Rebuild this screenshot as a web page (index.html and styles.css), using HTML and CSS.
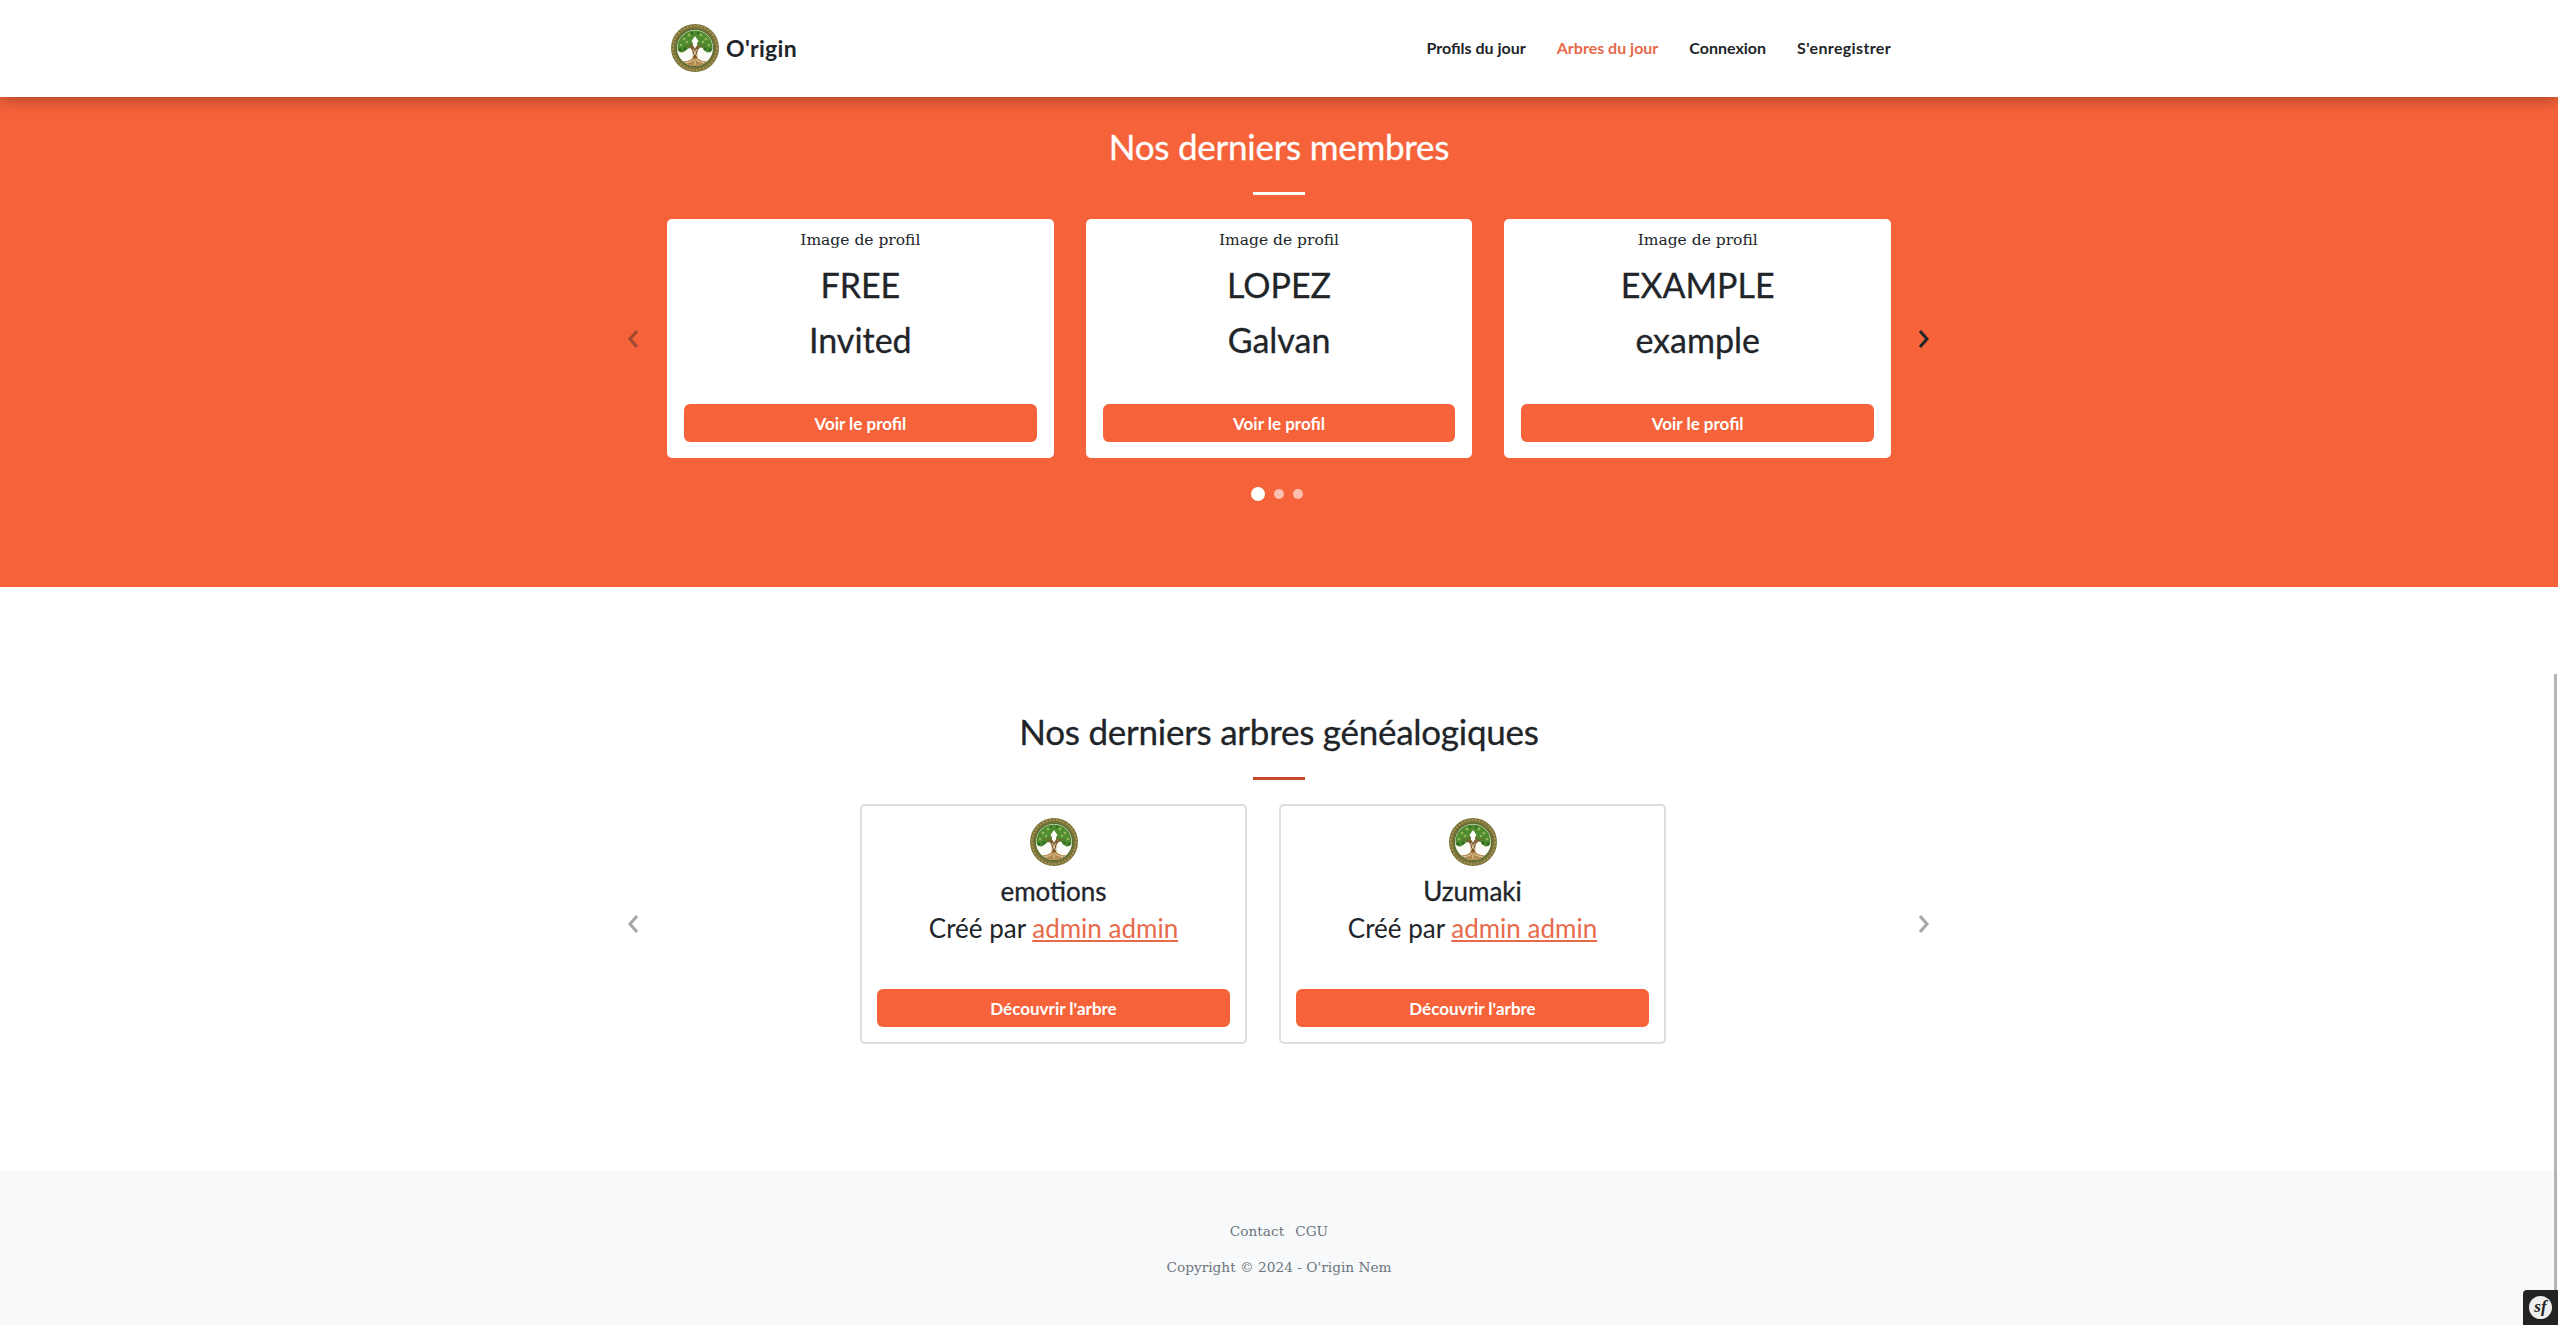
FILE: index.html
```html
<!DOCTYPE html>
<html lang="fr">
<head>
<meta charset="utf-8">
<title>O'rigin</title>
<link rel="stylesheet" href="styles.css">
</head>
<body>
<svg class="defs" width="0" height="0" aria-hidden="true">
  <symbol id="tree" viewBox="0 0 48 48">
    <circle cx="24" cy="24" r="24" fill="#7b7339"/>
    <circle cx="24" cy="24" r="22" fill="none" stroke="#a39254" stroke-width="2" stroke-dasharray="2 1.5"/>
    <circle cx="24" cy="24" r="19.5" fill="#5d6f33"/>
    <circle cx="24" cy="24" r="18" fill="#fdfbf5"/>
    <path d="M6.5 25C6 14 14 6.500 24 6.500S42 14 41.500 25c-1 3-4 4-6.500 3-1-3-5-5-8-5.500L24 14l-3 9.500c-3 .5-7 2.500-8 4.500-2.500 1-5.500 0-6.500-3z" fill="#4f8c2f"/>
    <g fill="#8fb65a">
      <circle cx="13" cy="15" r="1.500"/><circle cx="18" cy="11" r="1.500"/><circle cx="30" cy="11" r="1.500"/><circle cx="35" cy="15" r="1.500"/>
      <circle cx="10" cy="21" r="1.300"/><circle cx="38" cy="21" r="1.300"/><circle cx="16" cy="18" r="1.300"/><circle cx="32" cy="18" r="1.300"/>
    </g>
    <g fill="#2f6b20">
      <circle cx="9" cy="26" r="1.700"/><circle cx="39" cy="26" r="1.700"/><circle cx="14" cy="25" r="1.700"/><circle cx="34" cy="25" r="1.700"/>
      <circle cx="21" cy="9" r="1.200"/><circle cx="27" cy="9" r="1.200"/>
    </g>
    <path d="M24 12l3.500 5-3.500 5-3.500-5z" fill="#fff"/>
    <path d="M20.500 37c1.500-4 2-8 .5-11-2-3-5-4-8-4.500 3-.5 6 .5 8 2-.5-1.500-1.500-3-3-4.500 3 1 5 3 6 6 1-3 3-5 6-6-1.500 1.500-2.500 3-3 4.500 2-1.500 5-2.500 8-2-3 .5-6 1.500-8 4.500-1.500 3-1 7 .5 11z" fill="#7d5a2e"/>
    <path d="M22 25l5 9M26 25l-5 9" stroke="#e9d7ae" stroke-width=".9" fill="none"/>
    <path d="M12 37c4 .5 7-.5 10-3h4c3 2.500 6 3.500 10 3-3 3-7 5-12 5s-9-2-12-5z" fill="#b3884c"/>
    <path d="M15 38.500c3 0 6-1 8-3M33 38.500c-3 0-6-1-8-3M24 36v5" stroke="#f1e2bd" stroke-width=".8" fill="none"/>
  </symbol>
</svg>

<header class="site-header">
  <div class="wrap nav-row">
    <a class="brand" href="#">
      <svg class="logo"><use href="#tree"/></svg>
      <span>O'rigin</span>
    </a>
    <nav class="main-nav">
      <a href="#">Profils du jour</a>
      <a class="active" href="#">Arbres du jour</a>
      <a href="#">Connexion</a>
      <a class="signup" href="#">S'enregistrer</a>
    </nav>
  </div>
</header>

<main>
  <section class="hero">
    <h2 class="section-title light">Nos derniers membres</h2>
    <div class="rule rule-light"></div>
    <div class="carousel">
      <button class="arrow arrow-prev dim" aria-label="Précédent"><svg viewBox="0 0 14 22"><path d="M11 3L4 11l7 8"/></svg></button>
      <div class="cards">
        <article class="card">
          <p class="img-alt">Image de profil</p>
          <h3>FREE</h3>
          <h3>Invited</h3>
          <a class="btn" href="#">Voir le profil</a>
        </article>
        <article class="card">
          <p class="img-alt">Image de profil</p>
          <h3>LOPEZ</h3>
          <h3>Galvan</h3>
          <a class="btn" href="#">Voir le profil</a>
        </article>
        <article class="card">
          <p class="img-alt">Image de profil</p>
          <h3>EXAMPLE</h3>
          <h3>example</h3>
          <a class="btn" href="#">Voir le profil</a>
        </article>
      </div>
      <button class="arrow arrow-next" aria-label="Suivant"><svg viewBox="0 0 14 22"><path d="M3 3l7 8-7 8"/></svg></button>
    </div>
    <div class="dots"><span class="dot on"></span><span class="dot"></span><span class="dot"></span></div>
  </section>

  <section class="trees">
    <h2 class="section-title">Nos derniers arbres généalogiques</h2>
    <div class="rule rule-dark"></div>
    <div class="carousel">
      <button class="arrow arrow-prev faint" aria-label="Précédent"><svg viewBox="0 0 14 22"><path d="M11 3L4 11l7 8"/></svg></button>
      <div class="cards cards-shifted">
        <article class="card card-line">
          <svg class="logo tree-logo"><use href="#tree"/></svg>
          <h4>emotions</h4>
          <p class="by">Créé par <a href="#">admin admin</a></p>
          <a class="btn" href="#">Découvrir l'arbre</a>
        </article>
        <article class="card card-line">
          <svg class="logo tree-logo"><use href="#tree"/></svg>
          <h4>Uzumaki</h4>
          <p class="by">Créé par <a href="#">admin admin</a></p>
          <a class="btn" href="#">Découvrir l'arbre</a>
        </article>
      </div>
      <button class="arrow arrow-next faint" aria-label="Suivant"><svg viewBox="0 0 14 22"><path d="M3 3l7 8-7 8"/></svg></button>
    </div>
  </section>
</main>

<footer class="site-footer">
  <div class="foot-links"><a href="#">Contact</a><a href="#">CGU</a></div>
  <p class="copy">Copyright © 2024 - O'rigin Nem</p>
</footer>

<div class="scroll-thumb"></div>
<div class="sf-toolbar"><span class="sf-badge">sf</span></div>
</body>
</html>
```

FILE: styles.css
```css
* { box-sizing: border-box; }
html, body { margin: 0; height: 100%; }
body {
  font-family: "DejaVu Serif", "Liberation Serif", serif;
  color: #212529;
  background: #fff;
  overflow: hidden;
}
a { color: inherit; text-decoration: none; }
.defs { position: absolute; }
.wrap { width: 1224px; margin: 0 auto; }

.site-header {
  height: 97px;
  background: #fff;
  position: relative;
  z-index: 2;
  box-shadow: 0 4px 14px rgba(0, 0, 0, .28);
}
.nav-row {
  height: 100%;
  padding-bottom: 2px;
  display: flex;
  align-items: center;
  justify-content: space-between;
}
.brand {
  display: flex;
  align-items: center;
  gap: 7px;
  padding-left: 4px;
  font-family: Lato, sans-serif;
  font-weight: 700;
  font-size: 23px;
  letter-spacing: .3px;
}
.logo { width: 48px; height: 48px; display: block; }
.main-nav {
  display: flex;
  gap: 31px;
  font-family: Lato, sans-serif;
  font-weight: 700;
  font-size: 16px;
}
.main-nav .active { color: #e76a4c; }
.main-nav .signup { letter-spacing: .35px; }

.hero {
  height: 490px;
  background: #f6633a;
  padding-top: 26px;
}
.trees {
  height: 584px;
  padding-top: 121px;
}
.section-title {
  margin: 0;
  text-align: center;
  font-family: Lato, sans-serif;
  font-weight: 400;
  font-size: 35px;
  letter-spacing: -.25px;
  line-height: 46px;
  -webkit-text-stroke: .3px currentColor;
}
.section-title.light { color: #fff; }
.rule {
  width: 52px;
  height: 3px;
  margin: 23px auto 24px;
}
.rule-light { background: #fff; }
.rule-dark { background: #c8492a; }

.carousel {
  position: relative;
  width: 1224px;
  margin: 0 auto;
}
.cards {
  display: flex;
  justify-content: center;
  gap: 32px;
}
.cards-shifted { padding-right: 32px; }
.card {
  width: 387px;
  height: 239px;
  background: #fff;
  border-radius: 5px;
  padding: 9px 17px 16px;
  display: flex;
  flex-direction: column;
  align-items: center;
}
.card-line {
  height: 240px;
  border: 2px solid #dddddd;
  padding: 12px 15px 15px;
}
.img-alt {
  margin: 0;
  font-size: 15.500px;
  line-height: 24px;
}
.card h3 {
  font-family: Lato, sans-serif;
  font-weight: 400;
  font-size: 34px;
  line-height: 47px;
  height: 47px;
  margin: 9px 0 0;
  -webkit-text-stroke: .3px currentColor;
}
.card h3 + h3 { margin-top: 8px; }
.card h4 {
  margin: 7px 0 0;
  font-family: Lato, sans-serif;
  font-weight: 400;
  font-size: 26px;
  line-height: 36px;
  -webkit-text-stroke: .3px currentColor;
}
.tree-logo { flex: none; }
.by {
  margin: 1px 0 0;
  font-family: Lato, sans-serif;
  font-size: 26px;
  line-height: 36px;
}
.by a { color: #e76a4c; text-decoration: underline; }
.btn {
  margin-top: auto;
  width: 100%;
  height: 38px;
  border-radius: 6px;
  background: #f6633a;
  color: #fff;
  font-family: Lato, sans-serif;
  font-weight: 700;
  font-size: 17px;
  display: flex;
  align-items: center;
  justify-content: center;
}
.arrow {
  position: absolute;
  top: 50%;
  width: 14px;
  height: 22px;
  margin-top: -11px;
  padding: 0;
  background: none;
  border: 0;
  color: #212529;
}
.arrow svg { display: block; width: 100%; height: 100%; fill: none; stroke: currentColor; stroke-width: 3; }
.arrow-prev { left: -41px; }
.arrow-next { right: -40px; }
.arrow.dim { opacity: .4; }
.arrow.faint { opacity: .4; }
.dots {
  display: flex;
  justify-content: center;
  align-items: center;
  gap: 9px;
  margin-top: 29px;
  padding-right: 4px;
}
.dot {
  width: 10px;
  height: 10px;
  border-radius: 50%;
  background: rgba(255, 255, 255, .6);
}
.dot.on { width: 14px; height: 14px; background: #fff; }

.site-footer {
  height: 154px;
  background: #f8f9fa;
  padding-top: 47px;
  text-align: center;
  color: #6c757d;
  font-size: 13.700px;
}
.foot-links {
  display: flex;
  justify-content: center;
  gap: 11px;
  line-height: 26px;
}
.copy { margin: 10px 0 0; line-height: 26px; }

.scroll-thumb {
  position: fixed;
  right: 1px;
  top: 674px;
  width: 3px;
  bottom: 11px;
  background: #b5b5b5;
}
.sf-toolbar {
  position: fixed;
  right: 0;
  bottom: 0;
  width: 35px;
  height: 35px;
  background: #222;
  border-top-left-radius: 4px;
  display: flex;
  align-items: center;
  justify-content: center;
}
.sf-badge {
  width: 23px;
  height: 23px;
  border-radius: 50%;
  background: #eee;
  color: #222;
  font-family: "Liberation Serif", serif;
  font-style: italic;
  font-weight: 700;
  font-size: 17px;
  line-height: 22px;
  text-align: center;
}
```
